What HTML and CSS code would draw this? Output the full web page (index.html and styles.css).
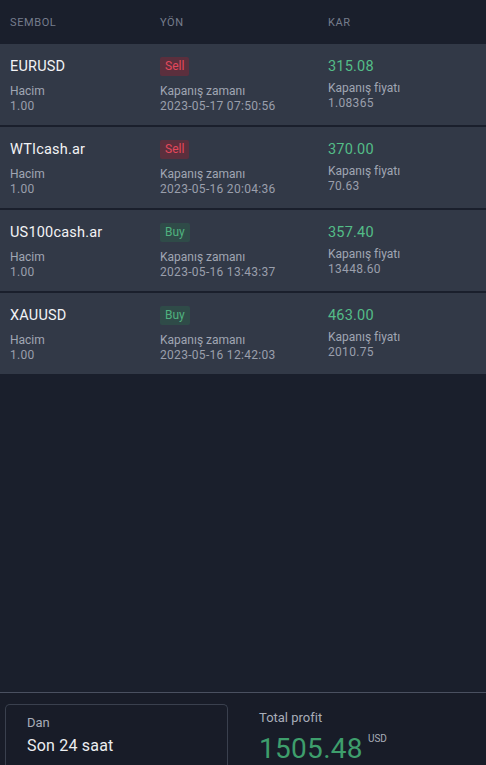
FILE: index.html
```html
<!DOCTYPE html>
<html lang="tr">
<head>
    <meta charset="UTF-8">
    <meta name="viewport" content="width=device-width, initial-scale=1.0">
    <title>Geçmiş</title>
    <link rel="stylesheet" href="styles.css">
</head>
<body>
    <div class="page">
        <div class="table-head">
            <span class="col col-sym">Sembol</span>
            <span class="col col-dir">Yön</span>
            <span class="col col-pl">Kar</span>
        </div>

        <div class="rows">
            <div class="row">
                <div class="col col-sym">
                    <div class="sym">EURUSD</div>
                    <div class="label">Hacim</div>
                    <div class="value">1.00</div>
                </div>
                <div class="col col-dir">
                    <span class="badge sell">Sell</span>
                    <div class="label">Kapanış zamanı</div>
                    <div class="value">2023-05-17 07:50:56</div>
                </div>
                <div class="col col-pl">
                    <div class="profit">315.08</div>
                    <div class="label">Kapanış fiyatı</div>
                    <div class="value">1.08365</div>
                </div>
            </div>

            <div class="row">
                <div class="col col-sym">
                    <div class="sym">WTIcash.ar</div>
                    <div class="label">Hacim</div>
                    <div class="value">1.00</div>
                </div>
                <div class="col col-dir">
                    <span class="badge sell">Sell</span>
                    <div class="label">Kapanış zamanı</div>
                    <div class="value">2023-05-16 20:04:36</div>
                </div>
                <div class="col col-pl">
                    <div class="profit">370.00</div>
                    <div class="label">Kapanış fiyatı</div>
                    <div class="value">70.63</div>
                </div>
            </div>

            <div class="row">
                <div class="col col-sym">
                    <div class="sym">US100cash.ar</div>
                    <div class="label">Hacim</div>
                    <div class="value">1.00</div>
                </div>
                <div class="col col-dir">
                    <span class="badge buy">Buy</span>
                    <div class="label">Kapanış zamanı</div>
                    <div class="value">2023-05-16 13:43:37</div>
                </div>
                <div class="col col-pl">
                    <div class="profit">357.40</div>
                    <div class="label">Kapanış fiyatı</div>
                    <div class="value">13448.60</div>
                </div>
            </div>

            <div class="row">
                <div class="col col-sym">
                    <div class="sym">XAUUSD</div>
                    <div class="label">Hacim</div>
                    <div class="value">1.00</div>
                </div>
                <div class="col col-dir">
                    <span class="badge buy">Buy</span>
                    <div class="label">Kapanış zamanı</div>
                    <div class="value">2023-05-16 12:42:03</div>
                </div>
                <div class="col col-pl">
                    <div class="profit">463.00</div>
                    <div class="label">Kapanış fiyatı</div>
                    <div class="value">2010.75</div>
                </div>
            </div>
        </div>

        <div class="footer">
            <div class="period">
                <div class="period-label">Dan</div>
                <div class="period-value">Son 24 saat</div>
            </div>
            <div class="total">
                <div class="total-label">Total profit</div>
                <div class="total-value">1505.48<sup>USD</sup></div>
            </div>
        </div>
    </div>
</body>
</html>
```

FILE: styles.css
```css
html, body {
    margin: 0;
    padding: 0;
    height: 100%;
}
body {
    font-family: Roboto, "Liberation Sans", sans-serif;
    background-color: #1a1f2c;
    color: #e8eaee;
    overflow: hidden;
}
.page {
    height: 765px;
    display: flex;
    flex-direction: column;
}
.table-head {
    display: flex;
    height: 44px;
    align-items: center;
    padding-left: 10px;
    font-size: 11px;
    letter-spacing: 0.6px;
    text-transform: uppercase;
    color: #767d8c;
}
.col-sym { width: 150px; }
.col-dir { width: 168px; }
.col-pl { flex: 1; }

.rows {
    display: flex;
    flex-direction: column;
    gap: 2px;
}
.row {
    display: flex;
    height: 81px;
    padding-left: 10px;
    background-color: #323947;
    box-sizing: border-box;
    padding-top: 14px;
}
.sym {
    font-size: 14.5px;
    line-height: 18px;
    color: #f2f3f5;
    letter-spacing: 0.2px;
    margin-bottom: 8px;
}
.label, .value {
    font-size: 12px;
    line-height: 15px;
    color: #a0a6b3;
}
.value {
    color: #9a9fac;
    letter-spacing: 0.3px;
}
.badge {
    display: inline-block;
    font-size: 12px;
    line-height: 19px;
    padding: 0 5px;
    border-radius: 2px;
    margin-top: -1px;
    margin-bottom: 8px;
    vertical-align: top;
}
.sell {
    background-color: #5b2f3d;
    color: #e4485c;
}
.buy {
    background-color: #2f4b48;
    color: #4fb27f;
}
.profit {
    font-size: 14.5px;
    line-height: 18px;
    color: #54bd87;
    letter-spacing: 0.2px;
    margin-bottom: 5px;
}

.footer {
    margin-top: auto;
    height: 73px;
    border-top: 1px solid #4a5060;
    display: flex;
    padding: 11px 0 0 5px;
    box-sizing: border-box;
    background-color: #181c28;
}
.period {
    width: 223px;
    box-sizing: border-box;
    border: 1px solid #3a404e;
    border-bottom: none;
    border-radius: 5px 5px 0 0;
    padding: 10px 0 0 21px;
}
.period-label {
    font-size: 13px;
    color: #a8adb8;
    margin-bottom: 6px;
}
.period-value {
    font-size: 16px;
    color: #eceef1;
    letter-spacing: 0.2px;
}
.total {
    padding: 6px 0 0 31px;
}
.total-label {
    font-size: 13px;
    color: #a8adb8;
    margin-bottom: 8px;
}
.total-value {
    font-size: 28px;
    color: #3e9e6c;
    line-height: 32px;
    letter-spacing: 0.3px;
}
.total-value sup {
    font-size: 10px;
    line-height: 0;
    color: #a8adb8;
    margin-left: 5px;
    vertical-align: 16px;
    letter-spacing: 0;
}
```
